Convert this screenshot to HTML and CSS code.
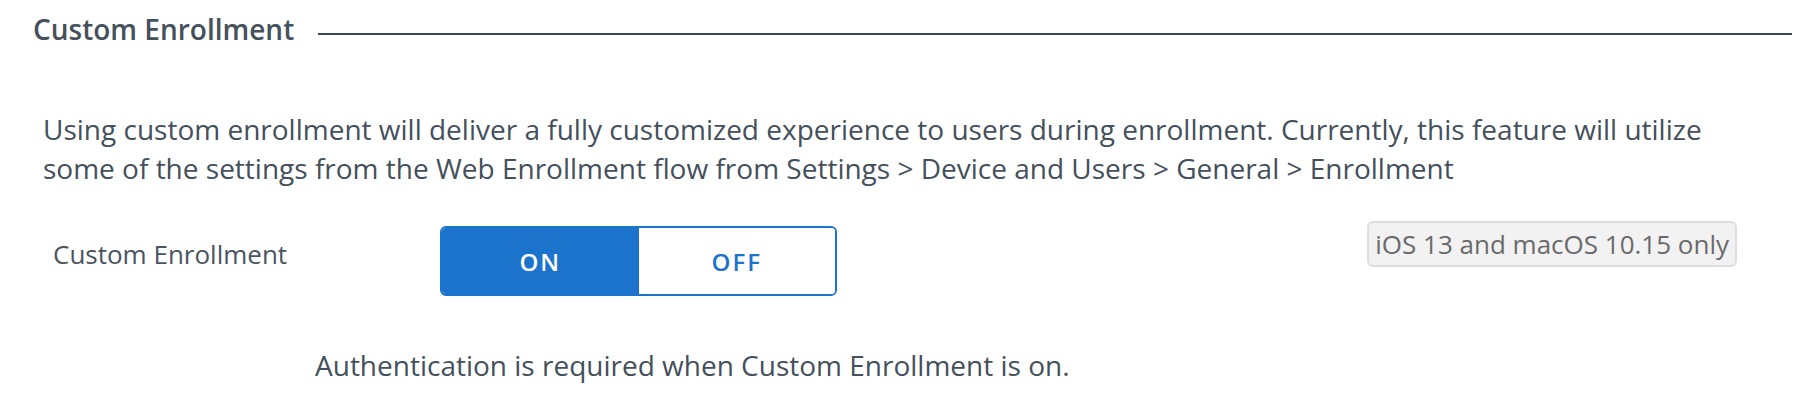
FILE: index.html
```html
<!DOCTYPE html>
<html lang="en">
<head>
<meta charset="utf-8">
<title>Custom Enrollment</title>
<link rel="stylesheet" href="styles.css">
</head>
<body>
<section class="section">
  <header class="section-header">
    <h2 class="section-title">Custom Enrollment</h2>
    <span class="section-rule"></span>
  </header>
  <p class="description">Using custom enrollment will deliver a fully customized experience to users during enrollment. Currently, this feature will utilize some of the settings from the Web Enrollment flow from Settings &gt; Device and Users &gt; General &gt; Enrollment</p>
  <div class="setting-row">
    <span class="setting-label">Custom Enrollment</span>
    <div class="toggle">
      <button class="toggle-btn is-active">ON</button>
      <button class="toggle-btn">OFF</button>
    </div>
    <span class="badge">iOS 13 and macOS 10.15 only</span>
  </div>
  <p class="note">Authentication is required when Custom Enrollment is on.</p>
</section>
</body>
</html>
```

FILE: styles.css
```css
html, body {
  margin: 0;
  padding: 0;
  background: #ffffff;
}

body {
  font-family: "Open Sans", "Noto Sans", sans-serif;
  color: #3f4b58;
  width: 1820px;
  height: 402px;
  overflow: hidden;
}

.section {
  padding: 9px 28px 0 33px;
}

.section-header {
  display: flex;
  align-items: center;
  height: 40px;
}

.section-title {
  margin: 0;
  font-size: 28px;
  font-weight: 600;
  line-height: 40px;
  color: #45515d;
  white-space: nowrap;
}

.section-rule {
  flex: 1;
  height: 2px;
  margin-left: 24px;
  margin-top: 9px;
  background: #3d4955;
}

.description {
  margin: 61px 80px 0 10px;
  font-size: 28px;
  line-height: 39px;
  color: #44505c;
}

.setting-row {
  display: flex;
  align-items: flex-start;
  margin-top: 33px;
  padding-left: 20px;
}

.setting-label {
  width: 387px;
  margin-top: 15px;
  font-size: 26px;
  line-height: 36px;
  color: #4a5561;
}

.toggle {
  display: flex;
  margin-top: 5px;
  width: 397px;
  height: 70px;
  box-sizing: border-box;
  border: 2px solid #1b73cc;
  border-radius: 6px;
  overflow: hidden;
}

.toggle-btn {
  flex: 1;
  margin: 0;
  padding: 0;
  border: 0;
  background: #ffffff;
  color: #1b73cc;
  font-family: inherit;
  font-size: 24px;
  font-weight: 600;
  letter-spacing: 2px;
}

.toggle-btn.is-active {
  background: #1b73cc;
  color: #ffffff;
}

.badge {
  margin-left: auto;
  margin-right: 55px;
  box-sizing: border-box;
  height: 46px;
  padding: 0 6px;
  border: 2px solid #dedede;
  border-radius: 6px;
  background: #f2f2f2;
  color: #6a6a6a;
  font-size: 26px;
  line-height: 42px;
  white-space: nowrap;
}

.note {
  margin: 50px 0 0 282px;
  font-size: 28px;
  line-height: 39px;
  color: #44505c;
}
```
